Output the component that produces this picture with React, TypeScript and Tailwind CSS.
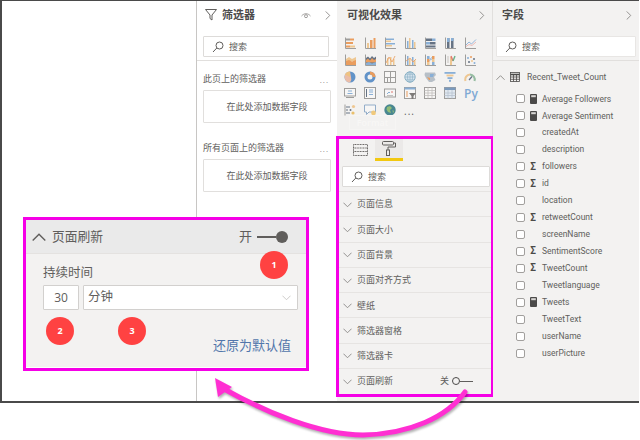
import { ReactNode } from 'react'

const axis = '#8a8886'
const orange = '#e8883a'
const blue = '#6f9fd0'
const sand = '#eebd7b'
const navy = '#44546a'

const Axes = () => <path d="M1.5 0.5V11.5H12" fill="none" stroke={axis} strokeWidth="1" />

const vizIcons: ReactNode[] = [
    <><Axes /><rect x="2" y="1.5" width="4" height="2" fill={axis} /><rect x="6" y="1.5" width="4" height="2" fill={orange} /><rect x="2" y="5" width="7" height="2" fill={orange} /><rect x="2" y="8.5" width="4" height="2" fill={orange} /><rect x="6" y="8.5" width="5" height="2" fill={sand} /></>,
    <><Axes /><rect x="3" y="6" width="2" height="5" fill={sand} /><rect x="6" y="3" width="2.5" height="8" fill={orange} /><rect x="9.5" y="1" width="2" height="10" fill={orange} /></>,
    <><Axes /><rect x="2" y="1.5" width="8" height="1.5" fill={blue} /><rect x="2" y="3.5" width="5" height="1.5" fill={sand} /><rect x="2" y="6" width="9" height="1.5" fill={blue} /><rect x="2" y="8" width="6" height="1.5" fill={sand} /></>,
    <><Axes /><rect x="3" y="4" width="1.5" height="7" fill={blue} /><rect x="5" y="1" width="1.5" height="10" fill={sand} /><rect x="8" y="3" width="1.5" height="8" fill={blue} /><rect x="10" y="5" width="1.5" height="6" fill={sand} /></>,
    <><Axes /><rect x="2" y="1.5" width="6" height="2.5" fill={navy} /><rect x="8" y="1.5" width="3.5" height="2.5" fill={blue} /><rect x="2" y="5" width="4" height="2.5" fill={blue} /><rect x="6" y="5" width="5.5" height="2.5" fill={navy} /><rect x="2" y="8.5" width="9.5" height="2" fill={navy} /></>,
    <><Axes /><rect x="3" y="1" width="2.5" height="10" fill={navy} /><rect x="3" y="1" width="2.5" height="4" fill={blue} /><rect x="7" y="1" width="2.5" height="10" fill={navy} /><rect x="7" y="1" width="2.5" height="3" fill={blue} /></>,
    <><Axes /><path d="M2 8L5 5L7.5 7L12 2.5" fill="none" stroke={blue} strokeWidth="0.9" /><path d="M2 9.5L5 7.5L8 8.5L12 5" fill="none" stroke="#e9a6a0" strokeWidth="0.9" /></>,
    <><Axes /><path d="M2 5L5 3L8 5L12 3V7H2Z" fill={sand} /><path d="M2 7L5 6L8 7.5L12 6V11H2Z" fill={orange} /></>,
    <><Axes /><path d="M2 4L4 2.5L6 4.5L8 2L10 4L12 2.5V11H2Z" fill={navy} /><path d="M2 6L4 4.5L6 6.5L8 4L10 6L12 5V8.5H2Z" fill={orange} /><path d="M2 9L5 8L8 9.5L12 8V11H2Z" fill={blue} /></>,
    <><Axes /><rect x="3" y="4" width="1.5" height="7" fill={sand} /><rect x="6" y="3" width="1.5" height="8" fill={sand} /><rect x="9" y="5" width="1.5" height="6" fill={sand} /><path d="M2 9L5 3L8 8L11 2" fill="none" stroke={orange} strokeWidth="0.8" /></>,
    <><Axes /><rect x="3" y="2" width="1.5" height="9" fill={blue} /><rect x="5" y="5" width="1.5" height="6" fill={sand} /><rect x="8" y="3" width="1.5" height="8" fill={blue} /><rect x="10" y="6" width="1.5" height="5" fill={sand} /><path d="M2 7L6 4L9 8L12 5" fill="none" stroke={orange} strokeWidth="0.8" /></>,
    <><Axes /><rect x="3" y="2" width="2.5" height="3" fill={blue} /><rect x="3" y="5" width="2.5" height="3" fill={orange} /><rect x="3" y="8" width="2.5" height="3" fill={sand} /><rect x="8" y="2" width="2.5" height="3" fill={orange} /><rect x="8" y="5" width="2.5" height="3" fill={sand} /><rect x="8" y="8" width="2.5" height="3" fill={blue} /><path d="M5.5 4L8 6M5.5 7L8 3" stroke={blue} strokeWidth="0.7" /></>,
    <><Axes /><path d="M4 2V9" stroke="#d8d6d4" strokeWidth="2" /><path d="M7 3V11" stroke={sand} strokeWidth="2" /><path d="M7 2L9 7" stroke="#dd5a50" strokeWidth="1.4" /><path d="M9 7L11 2" stroke="#4aa070" strokeWidth="1.4" /></>,
    <><Axes /><circle cx="4" cy="4" r="1" fill={blue} /><circle cx="7" cy="3" r="1" fill={orange} /><circle cx="10" cy="5" r="1" fill={navy} /><circle cx="5" cy="8" r="1" fill={navy} /><circle cx="8" cy="7" r="1" fill={sand} /><circle cx="10.5" cy="9" r="1" fill={blue} /></>,
    <><circle cx="6" cy="6" r="5.5" fill="#3f7cbf" /><path d="M6 0.5A5.5 5.5 0 0 0 6 11.5A5.5 5.5 0 0 0 7 6Z" fill="#eab196" /><path d="M6 0.5V6L1 3.5A5.5 5.5 0 0 1 6 0.5Z" fill="#eeb867" /></>,
    <><circle cx="6" cy="6" r="4" fill="none" stroke="#3f7cbf" strokeWidth="3" /><path d="M6 2A4 4 0 0 1 10 6" fill="none" stroke={orange} strokeWidth="3" /></>,
    <><rect x="0.5" y="0.5" width="11" height="11" fill="#f8f7f6" stroke={axis} /><path d="M6.5 0.5V11.5M0.5 6.5H11.5M3.5 6.5V11.5" stroke={axis} /></>,
    <><circle cx="6" cy="6" r="5.2" fill="#cfe0ee" stroke="#6fa0b8" /><path d="M1 6H11M6 1V11M2 3.2H10M2 8.8H10" stroke="#6fa0b8" strokeWidth="0.6" /><ellipse cx="6" cy="6" rx="2.5" ry="5.2" fill="none" stroke="#6fa0b8" strokeWidth="0.6" /></>,
    <><path d="M1 1.5H11L12 4L10 6L11.5 9L8 11H5L2 7L0.5 4Z" fill="#a9b3bd" /><path d="M6 3H10L9 6H6Z" fill={blue} /><path d="M3 6L6 7V9H5Z" fill={orange} /></>,
    <><rect x="0.5" y="1" width="11" height="1.8" fill={blue} /><rect x="2.5" y="3.6" width="7" height="1.8" fill={sand} /><rect x="3.5" y="6.2" width="5" height="1.8" fill={blue} /><rect x="5" y="8.8" width="2" height="2" fill={blue} /></>,
    <><path d="M1.5 10A5 5 0 0 1 6 3.5" fill="none" stroke={sand} strokeWidth="2" /><path d="M6 3.5A5 5 0 0 1 10.5 10" fill="none" stroke="#7fb08e" strokeWidth="2" /><path d="M5 9L8 5.5" stroke={navy} strokeWidth="1.2" /></>,
    <><rect x="0.5" y="1.5" width="11" height="7.5" fill="#f8f7f6" stroke={axis} /><path d="M4 4H8M3.5 6.5H8.5" stroke={blue} /><path d="M2 10.5H10" stroke={axis} /></>,
    <><rect x="0.5" y="0.5" width="11" height="11" fill="#f8f7f6" stroke={axis} /><rect x="2" y="2" width="1" height="8" fill={navy} /><path d="M5 3H9M5 5H9M5 7.5H9" stroke={blue} /></>,
    <><rect x="0.5" y="2" width="11" height="8" fill="#f8f7f6" stroke={axis} /><path d="M3 7L5 5L6 6" fill="none" stroke={blue} /><path d="M7 5H9" stroke="#dd5a50" /><path d="M3 8.5H9" stroke={axis} strokeWidth="0.6" /></>,
    <><rect x="0.5" y="0.5" width="11" height="11" fill="#f8f7f6" stroke={axis} /><rect x="0.5" y="0.5" width="11" height="2" fill={blue} /><path d="M2 5H4M2 7H4M2 9H4" stroke={orange} /><path d="M5 6H12L9.5 9V12H7.5V9Z" fill="#605e5c" /></>,
    <><rect x="0.5" y="0.5" width="11" height="11" fill="#f8f7f6" stroke={axis} /><path d="M0.5 3.5H11.5M0.5 6H11.5M0.5 8.5H11.5M4 0.5V11.5M8 0.5V11.5" stroke="#b5b3b1" strokeWidth="0.8" /></>,
    <><rect x="0.5" y="0.5" width="11" height="11" fill="#dce6f0" stroke={axis} /><rect x="0.5" y="0.5" width="11" height="2.5" fill="#5c84b0" /><path d="M0.5 6H11.5M0.5 8.5H11.5M4 3V11.5M8 3V11.5" stroke="#a9b8c8" strokeWidth="0.8" /></>,
    <span className="text-[12px] leading-none font-semibold text-[#7fa9d4]">Py</span>,
    <><path d="M1 0.5V11.5" stroke={axis} /><path d="M2 3H6M2 6H4M2 9H6" stroke={navy} /><circle cx="9.5" cy="2.5" r="1.6" fill={sand} /><circle cx="6.5" cy="6" r="1" fill={navy} /><circle cx="9" cy="9" r="1.6" fill="#e9b44c" /></>,
    <><path d="M0.5 1H11.5V8H5L2.5 10.5V8H0.5Z" fill="#f8f7f6" stroke="#7c9cc0" /><circle cx="9.5" cy="9" r="2.4" fill="#f0c060" /></>,
    <><circle cx="6" cy="6" r="5.7" fill="#1f6d7a" /><path d="M3 3L6 2L8 4L6 6L7 9L4 8L2.5 5.5Z" fill="#79b15b" /><path d="M8.5 6L10 7L9 9.5Z" fill="#79b15b" /></>,
    <span className="text-[10px] leading-none text-[#605e5c] tracking-[1px]">...</span>,
]

const formatSections = ['页面信息', '页面大小', '页面背景', '页面对齐方式', '壁纸', '筛选器窗格', '筛选器卡', '页面刷新']

// m = 度量值, s = 求和, '' = 无图标
const fields: [string, string][] = [
    ['Average Followers', 'm'],
    ['Average Sentiment', 'm'],
    ['createdAt', ''],
    ['description', ''],
    ['followers', 's'],
    ['id', 's'],
    ['location', ''],
    ['retweetCount', 's'],
    ['screenName', ''],
    ['SentimentScore', 's'],
    ['TweetCount', 's'],
    ['Tweetlanguage', ''],
    ['Tweets', 'm'],
    ['TweetText', ''],
    ['userName', ''],
    ['userPicture', ''],
]

const Chevron = ({ dir, size = 9, color = '#8a8886' }: { dir: 'up' | 'down' | 'right'; size?: number; color?: string }) => (
    <svg width={size} height={size} viewBox="0 0 10 10" fill="none" stroke={color} strokeWidth="1" className="shrink-0">
        {dir === 'up' && <path d="M0.5 7.5L5 3L9.5 7.5" />}
        {dir === 'down' && <path d="M0.5 3L5 7.5L9.5 3" />}
        {dir === 'right' && <path d="M3 0.5L7.5 5L3 9.5" />}
    </svg>
)

const SearchBox = ({ className }: { className: string }) => (
    <div className={`flex items-center gap-[5px] pl-[8px] h-[21px] bg-white border border-[#dddbd9] rounded-[1px] ${className}`}>
        <svg width="12" height="12" viewBox="0 0 12 12" fill="none" stroke="#605e5c" strokeWidth="1">
            <circle cx="7.5" cy="4.5" r="3.5" />
            <path d="M4.8 7L1 11" />
        </svg>
        <span className="text-[9px] leading-none text-[#605e5c]">搜索</span>
    </div>
)

const DropZone = () => (
    <div className="flex items-center justify-center h-[33px] bg-white border border-[#e1dfdd] rounded-[1px] text-[9px] text-[#605e5c]">
        在此处添加数据字段
    </div>
)

const FieldIcon = ({ kind }: { kind: string }) => {
    if (kind === 'm') {
        return (
            <svg width="7" height="10" viewBox="0 0 7 10">
                <rect width="7" height="10" rx="1" fill="#4b4a49" />
                <rect x="1.2" y="1.2" width="4.6" height="2" fill="#d8d6d4" />
            </svg>
        )
    }
    if (kind === 's') {
        return <span className="text-[10px] leading-none font-semibold text-[#4b4a49]">Σ</span>
    }
    return null
}

const Badge = ({ n, className }: { n: number; className: string }) => (
    <div className={`absolute flex items-center justify-center w-[28px] h-[28px] rounded-full bg-[#ff4242] text-white text-[9px] font-bold ${className}`}>
        {n}
    </div>
)

const App = () => {
    return (
        <div className="relative w-[640px] h-[440px] bg-white overflow-hidden font-['Open_Sans','Noto_Sans_CJK_SC',sans-serif]">
            <div className="flex w-[639px] h-[403px] border-2 border-t border-r border-[#4a4a4a] border-b-2">
                {/* 画布 */}
                <div className="w-[195px] shrink-0 bg-white border-r border-[#c8c6c4]" />

                {/* 筛选器 */}
                <div className="flex flex-col w-[140px] shrink-0 bg-white">
                    <div className="flex items-center h-[28px] pl-[8px] pr-[5px]">
                        <svg width="12" height="12" viewBox="0 0 12 12" fill="none" stroke="#605e5c" strokeWidth="1">
                            <path d="M0.5 0.5H11.5L7 6V11L5 9.5V6Z" />
                        </svg>
                        <span className="ml-[5px] text-[11px] font-bold text-[#4b4a49]">筛选器</span>
                        <svg width="10" height="7" viewBox="0 0 10 7" fill="none" stroke="#8a8886" strokeWidth="0.8" className="ml-auto mr-[12px]">
                            <path d="M0.5 4C3 1 7 1 9.5 4" />
                            <circle cx="5" cy="4.2" r="1.5" />
                        </svg>
                        <Chevron dir="right" />
                    </div>
                    <SearchBox className="mx-[6px] mt-[7px] w-[126px]" />
                    <div className="mt-[3px] border-t border-[#e1dfdd]" />
                    <div className="flex items-center justify-between pl-[6px] pr-[8px] mt-[12px] h-[12px] text-[9px] text-[#605e5c]">
                        <span>此页上的筛选器</span>
                        <span className="tracking-[1px] text-[8px] mt-[2px] text-[#8a8886]">...</span>
                    </div>
                    <div className="mx-[6px] mt-[5px]"><DropZone /></div>
                    <div className="flex items-center justify-between pl-[6px] pr-[8px] mt-[19px] h-[12px] text-[9px] text-[#605e5c]">
                        <span>所有页面上的筛选器</span>
                        <span className="tracking-[1px] text-[8px] mt-[2px] text-[#8a8886]">...</span>
                    </div>
                    <div className="mx-[6px] mt-[5px]"><DropZone /></div>
                </div>

                {/* 可视化效果 */}
                <div className="flex flex-col w-[156px] shrink-0 bg-[#f3f2f1]">
                    <div className="relative h-[135px] shrink-0 pl-[7px] border-r border-[#e1dfdd]">
                        <div className="flex items-center justify-between h-[28px] pl-[3px] pr-[6px]">
                            <span className="text-[11px] font-bold text-[#4b4a49]">可视化效果</span>
                            <Chevron dir="right" />
                        </div>
                        <div className="grid grid-cols-[repeat(7,20px)] auto-rows-[16.8px] mt-[8px]">
                            {vizIcons.map((icon, i) => (
                                <div key={i} className="flex items-center h-[13px]">
                                    {i === 27 || i === 31 ? icon : (
                                        <svg width="13" height="13" viewBox="0 0 13 13" className="opacity-80">{icon}</svg>
                                    )}
                                </div>
                            ))}
                        </div>
                        <div className="absolute left-[12px] top-[114px] flex items-center justify-center w-[47px] h-[15px] border border-[#f6f5f4] text-[9px] font-semibold text-[#f8f7f6]">
                            Format
                        </div>
                    </div>

                    <div className="flex flex-col h-[261px] shrink-0 -mx-px border-[3px] border-[#f500e6] pb-0">
                        <div className="flex h-[22px] shrink-0 pl-[13px]">
                            <div className="flex items-center justify-center w-[16px] mr-[7px]">
                                <svg width="15" height="12" viewBox="0 0 15 12" fill="none" stroke="#605e5c" strokeWidth="1" strokeDasharray="1 0.6">
                                    <rect x="0.5" y="0.5" width="14" height="11" />
                                    <path d="M0.5 4H14.5M0.5 7.5H14.5" />
                                </svg>
                            </div>
                            <div className="flex items-center justify-center w-[28px] bg-[#ebe9e8] border-b-[3px] border-[#f2c811]">
                                <svg width="14" height="15" viewBox="0 0 14 15" fill="none" stroke="#605e5c" strokeWidth="1">
                                    <rect x="0.5" y="0.5" width="11" height="3.5" rx="1" />
                                    <path d="M11.5 2H13.5V6H6V9" />
                                    <rect x="4.5" y="9" width="3" height="5.5" />
                                </svg>
                            </div>
                        </div>
                        <SearchBox className="ml-[3px] mt-[5px] mr-0 w-[148px]" />
                        <div className="flex flex-col mt-[4px]">
                            {formatSections.map((name) => (
                                <div key={name} className="flex items-center gap-[5px] h-[25.3px] pl-[4px] border-t border-[#e6e4e2] text-[9px] text-[#605e5c]">
                                    <Chevron dir="down" />
                                    <span>{name}</span>
                                    {name === '页面刷新' && (
                                        <div className="flex items-center ml-auto mr-[18px]">
                                            <span>关</span>
                                            <div className="ml-[3px] w-[8px] h-[8px] rounded-full border-[1.5px] border-[#4b4a49]" />
                                            <div className="w-[13px] h-px bg-[#605e5c]" />
                                        </div>
                                    )}
                                </div>
                            ))}
                        </div>
                    </div>
                </div>

                {/* 字段 */}
                <div className="flex flex-col flex-1 bg-[#f3f2f1]">
                    <div className="flex items-center justify-between h-[28px] pl-[9px] pr-[6px]">
                        <span className="text-[11px] font-bold text-[#4b4a49]">字段</span>
                        <Chevron dir="right" />
                    </div>
                    <SearchBox className="mx-[3px] mt-[7px] w-[140px] border-[#e8e6e4]" />
                    <div className="mt-[3px] border-t border-[#e1dfdd]" />
                    <div className="flex items-center h-[16px] mt-[8px] pl-[3px] text-[8.5px] text-[#605e5c] font-['Roboto','Noto_Sans_CJK_SC',sans-serif]">
                        <Chevron dir="up" />
                        <svg width="10" height="10" viewBox="0 0 10 10" className="ml-[5px]" fill="none" stroke="#4b4a49" strokeWidth="0.8">
                            <rect x="0.5" y="0.5" width="9" height="9" />
                            <path d="M0.5 2.5H9.5" strokeWidth="1.6" />
                            <path d="M0.5 5H9.5M0.5 7.3H9.5M3.5 2V9.5M6.5 2V9.5" />
                        </svg>
                        <span className="ml-[7px]">Recent_Tweet_Count</span>
                    </div>
                    <div className="flex flex-col mt-[5.5px]">
                        {fields.map(([name, kind]) => (
                            <div key={name} className="flex items-center h-[16.95px] pl-[23px] text-[8.5px] text-[#605e5c] font-['Roboto','Noto_Sans_CJK_SC',sans-serif]">
                                <div className="w-[9px] h-[9px] bg-white border border-[#a19f9d] rounded-[2px]" />
                                <div className="flex items-center justify-center w-[14px] ml-[1px]"><FieldIcon kind={kind} /></div>
                                <span className="ml-[2px]">{name}</span>
                            </div>
                        ))}
                    </div>
                </div>
            </div>

            {/* 放大的页面刷新卡片 */}
            <div className="absolute left-[23px] top-[217px] flex flex-col w-[286px] h-[154px] border-[3px] border-[#f500e6] bg-white">
                <div className="flex flex-col h-[147px] bg-[#f3f2f1]">
                    <div className="flex items-center h-[34px] pl-[6px] pr-[18px] bg-[#eaeaea] border-b border-[#e4e2e0] text-[#605e5c]">
                        <Chevron dir="up" size={14} color="#605e5c" />
                        <span className="ml-[6px] text-[12.75px]">页面刷新</span>
                        <span className="ml-auto text-[13px]">开</span>
                        <div className="ml-[5px] w-[19px] h-[2px] bg-[#605e5c]" />
                        <div className="w-[12px] h-[12px] rounded-full bg-[#605e5c]" />
                    </div>
                    <div className="flex flex-col pl-[17px] pr-[8px]">
                        <span className="mt-[10px] text-[12.5px] leading-[18px] text-[#605e5c]">持续时间</span>
                        <div className="flex gap-[4px] mt-[3px]">
                            <div className="flex items-center justify-center w-[36px] h-[25px] bg-white border border-[#d2d0ce] rounded-[1px] text-[12px] text-[#605e5c]">30</div>
                            <div className="flex items-center justify-between flex-1 h-[25px] pl-[4px] pr-[6px] bg-white border border-[#d2d0ce] rounded-[1px] text-[12.5px] text-[#605e5c]">
                                <span>分钟</span>
                                <Chevron dir="down" color="#c8c6c4" />
                            </div>
                        </div>
                        <div className="flex justify-end pr-[7px] mt-[26px] text-[13px] leading-[18px] text-[#5276ab]">还原为默认值</div>
                    </div>
                </div>
                <Badge n={1} className="left-[234px] top-[31px]" />
                <Badge n={2} className="left-[20px] top-[97px]" />
                <Badge n={3} className="left-[92px] top-[97px]" />
            </div>

            {/* 箭头 */}
            <svg width="640" height="440" viewBox="0 0 640 440" className="absolute left-0 top-0 pointer-events-none drop-shadow-[1px_2px_1px_rgba(0,0,0,0.3)]">
                <path d="M465 392C447 417 410 434 363 435C320 435 265 412 224 389" fill="none" stroke="#ff2fd2" strokeWidth="5" strokeLinecap="round" />
                <path d="M215 378L232 387L218 397Z" fill="#ff2fd2" />
            </svg>
        </div>
    )
}

export default App
